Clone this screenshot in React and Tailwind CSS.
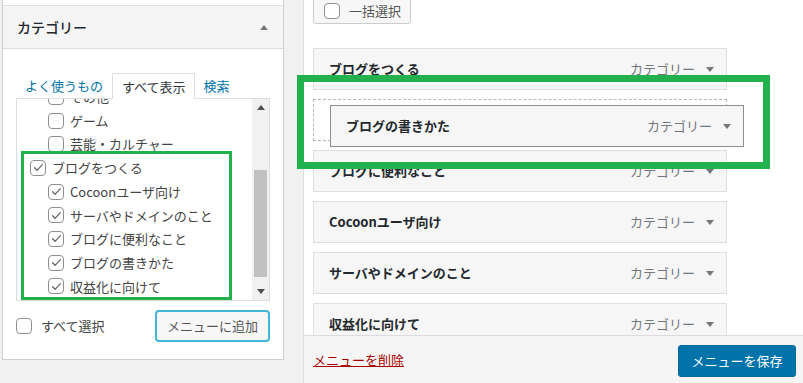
function CheckBox({ checked = false }) {
  return (
    <span className="flex h-4 w-4 shrink-0 items-center justify-center rounded-[4px] border border-[#8c8f94] bg-white">
      {checked ? (
        <svg viewBox="0 0 16 16" className="h-[13px] w-[13px]" aria-hidden="true">
          <path d="M3.2 8.4l3.1 3.1 6.4-7" fill="none" stroke="#6b6b6b" strokeWidth="1.7" strokeLinecap="round" strokeLinejoin="round" />
        </svg>
      ) : null}
    </span>
  )
}

function Triangle({ up = false, color = '#72777c' }) {
  return (
    <svg width="8" height="5" viewBox="0 0 8 5" aria-hidden="true">
      <path d={up ? 'M0 5L4 0L8 5z' : 'M0 0L8 0L4 5z'} fill={color} />
    </svg>
  )
}

const categoryRows = [
  { label: 'その他', depth: 1, checked: false },
  { label: 'ゲーム', depth: 1, checked: false },
  { label: '芸能・カルチャー', depth: 1, checked: false },
  { label: 'ブログをつくる', depth: 0, checked: true },
  { label: 'Cocoonユーザ向け', depth: 1, checked: true },
  { label: 'サーバやドメインのこと', depth: 1, checked: true },
  { label: 'ブログに便利なこと', depth: 1, checked: true },
  { label: 'ブログの書きかた', depth: 1, checked: true },
  { label: '収益化に向けて', depth: 1, checked: true },
]

const menuItems = [
  'ブログをつくる',
  null,
  'ブログに便利なこと',
  'Cocoonユーザ向け',
  'サーバやドメインのこと',
  '収益化に向けて',
]

function CategoryPanel() {
  return (
    <div className="relative ml-[2px] h-[360px] w-[282px] border-x border-b border-[#ccd0d4] bg-white">
      <div className="h-[6px] border-b border-[#dddddd]" />
      <div className="flex h-[43px] items-center justify-between border-b border-[#dddddd] bg-[#f5f5f5] pl-[14px] pr-[15px]">
        <h3 className="text-[14px] font-medium text-[#23282d]">カテゴリー</h3>
        <Triangle up />
      </div>

      <div className="pt-[24px]">
        <div className="flex h-[25px] items-stretch pl-[13px] text-[13px]">
          <span className="flex items-center px-[9px] text-[#0073aa]">よく使うもの</span>
          <span className="relative z-10 -mb-px flex items-center border-x border-t border-[#dddddd] bg-white pl-[9px] pr-[8px] text-[#32373c]">
            すべて表示
          </span>
          <span className="flex items-center px-[9px] text-[#0073aa]">検索</span>
        </div>

        <div className="ml-[13px] flex h-[203px] w-[254px] border border-[#dddddd] bg-white">
          <div className="flex-1 overflow-hidden">
            <div className="-mt-[14px]">
              {categoryRows.map((row) => (
                <div
                  key={row.label}
                  className={`flex h-[23.7px] items-center gap-[6px] text-[13px] text-[#444444] ${
                    row.depth === 0 ? 'pl-[13px]' : 'pl-[31px]'
                  }`}
                >
                  <CheckBox checked={row.checked} />
                  <span className="whitespace-nowrap">{row.label}</span>
                </div>
              ))}
            </div>
          </div>
          <div className="flex w-[17px] flex-col bg-[#f1f1f1]">
            <div className="flex h-[17px] items-center justify-center">
              <Triangle up color="#505050" />
            </div>
            <div className="flex-1 px-[2px] pt-[54px]">
              <div className="h-[107px] bg-[#c1c1c1]" />
            </div>
            <div className="flex h-[17px] items-center justify-center">
              <Triangle color="#505050" />
            </div>
          </div>
        </div>

        <div className="mt-[9px] flex items-center justify-between px-[13px]">
          <label className="flex items-center gap-[9px] text-[13px] text-[#444444]">
            <CheckBox />
            すべて選択
          </label>
          <button className="h-[32px] w-[115px] rounded-[4px] border-2 border-[#41b6d8] bg-[#f7f7f7] text-[13px] text-[#555555]">
            メニューに追加
          </button>
        </div>
      </div>

      <div className="pointer-events-none absolute left-[18px] top-[151px] h-[149px] w-[211px] border-[3px] border-[#22b14c]" />
    </div>
  )
}

function MenuItem({ title }) {
  return (
    <div className="flex h-[42px] w-[414px] items-center justify-between border border-[#dfdfdf] bg-[#f6f6f6] pl-[15px] pr-[12px]">
      <span className="text-[13px] font-bold text-[#23282d]">{title}</span>
      <span className="flex items-center gap-[11px] text-[13px] text-[#72777c]">
        カテゴリー
        <Triangle />
      </span>
    </div>
  )
}

function MenuPanel() {
  return (
    <div className="relative flex h-full flex-1 flex-col border-l border-[#dddddd] bg-white">
      <div className="flex-1 overflow-hidden pl-[9px]">
        <div className="-mt-[3px] flex h-[27px] w-[98px] items-center gap-[9px] rounded-[3px] border border-[#cccccc] bg-[#f7f7f7] pl-[10px] text-[13px] text-[#555555]">
          <CheckBox />
          一括選択
        </div>
        <div className="mt-[24px] flex flex-col gap-[9px]">
          {menuItems.map((title, index) =>
            title ? (
              <MenuItem key={title} title={title} />
            ) : (
              <div key={`placeholder-${index}`} className="h-[42px] w-[414px] border border-dashed border-[#b4b9be]" />
            )
          )}
        </div>
      </div>

      <div className="flex h-[48px] items-center justify-between border-t border-[#dcdcde] bg-[#f5f5f5] pl-[9px] pr-[7px]">
        <a className="text-[13px] text-[#aa0000] underline">メニューを削除</a>
        <button className="mt-[3px] h-[32px] w-[118px] rounded-[3px] border border-[#006799] bg-[#0073aa] text-[13px] text-white">
          メニューを保存
        </button>
      </div>

      <div className="absolute left-[26px] top-[105px] flex h-[42px] w-[414px] items-center justify-between border border-[#8c8f94] bg-[#f6f6f6] pl-[15px] pr-[12px]">
        <span className="text-[13px] font-bold text-[#23282d]">ブログの書きかた</span>
        <span className="flex items-center gap-[11px] text-[13px] text-[#72777c]">
          カテゴリー
          <Triangle />
        </span>
      </div>
    </div>
  )
}

export default function App() {
  return (
    <div className="relative flex h-[383px] w-[803px] overflow-hidden bg-[#f1f1f1] font-['Noto_Sans_CJK_JP','Noto_Sans',sans-serif]">
      <div className="w-[303px] shrink-0">
        <CategoryPanel />
      </div>
      <MenuPanel />
      <div className="pointer-events-none absolute left-[297px] top-[75px] h-[94px] w-[473px] border-[7px] border-[#22b14c]" />
    </div>
  )
}
